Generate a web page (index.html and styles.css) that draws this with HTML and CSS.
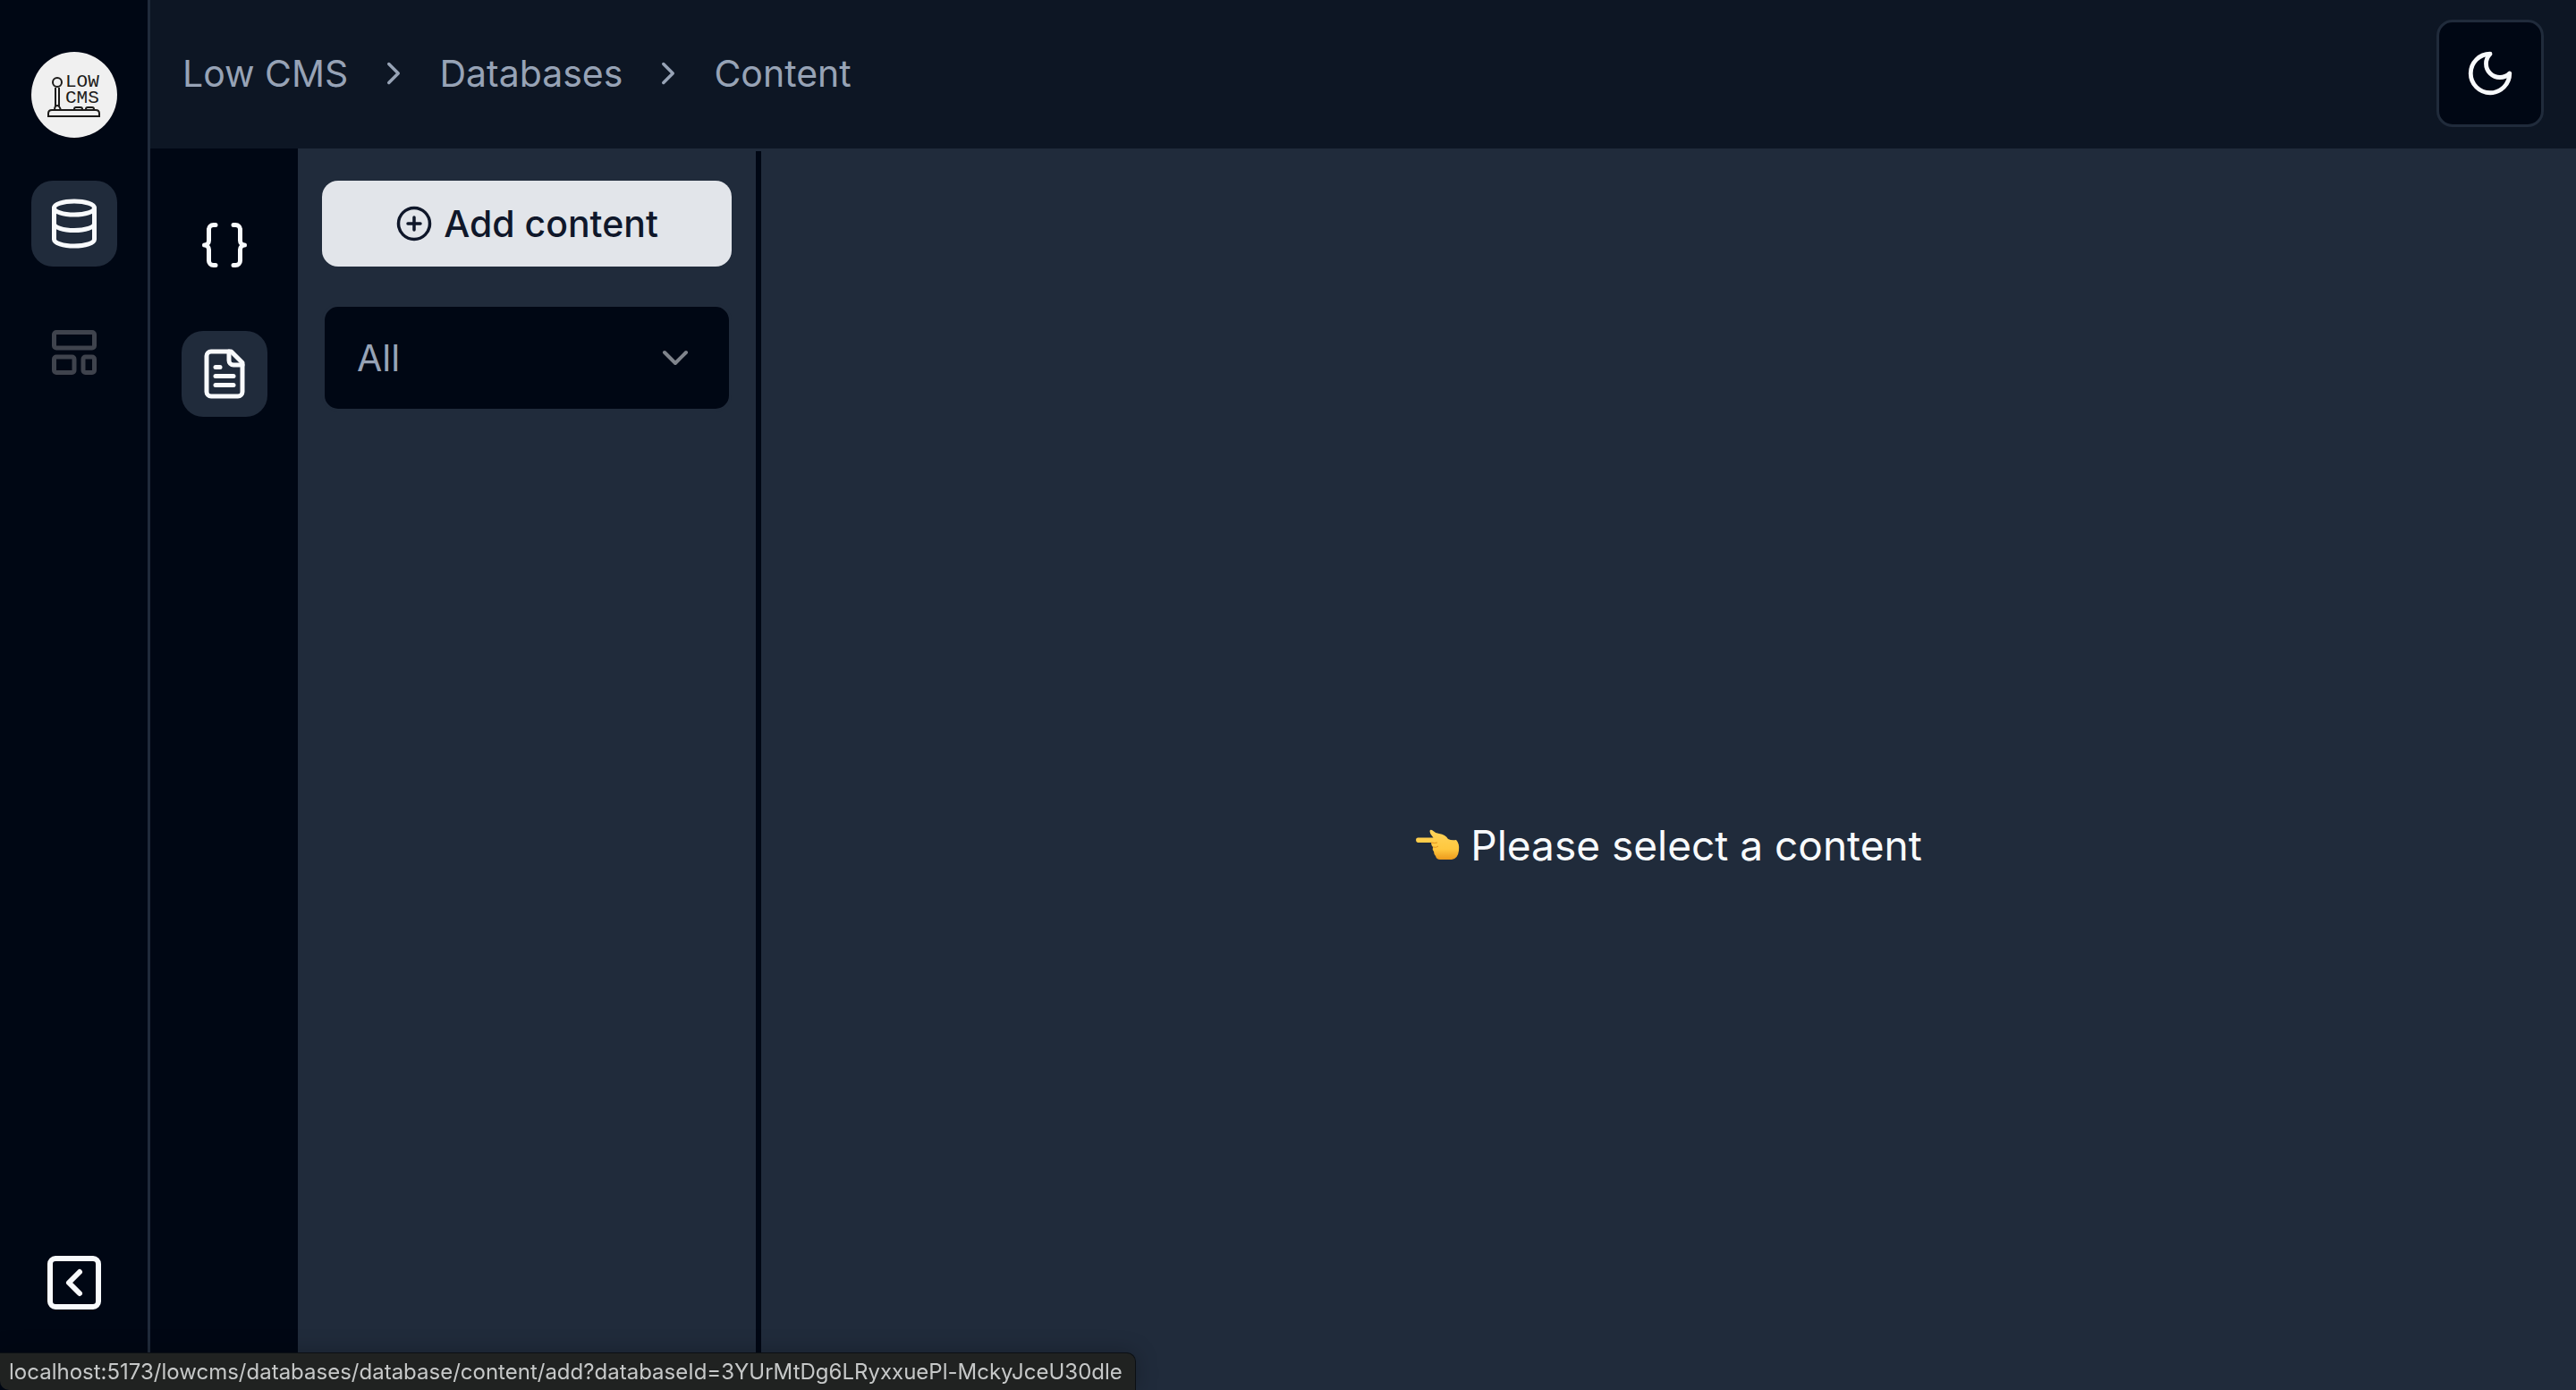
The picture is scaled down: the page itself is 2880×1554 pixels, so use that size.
FILE: index.html
```html
<!DOCTYPE html>
<html lang="en">
<head>
<meta charset="utf-8">
<title>Low CMS</title>
<link rel="stylesheet" href="styles.css">
</head>
<body>
<div class="app">
  <nav class="rail" aria-label="Main">
    <a class="logo" href="#" aria-label="Low CMS home">
      <svg viewBox="0 0 96 96" fill="none" stroke="#1c1b19" stroke-width="2">
        <circle cx="29" cy="34" r="5"/>
        <path d="M27 40v21M31 40v21M26 65c0-3 1-5 3-5s3 2 4 5"/>
        <path d="M19 72v-3q0-4 4-4h49q4 0 4 4v3z"/>
        <path d="M48 65v-1q0-2 2-2h5q2 0 2 2v1M61 65v-1q0-2 2-2h5q2 0 2 2v1"/>
        <text class="logo-text" x="38" y="39">LOW</text>
        <text class="logo-text" x="38" y="57">CMS</text>
      </svg>
    </a>
    <a class="nav-item active" href="#" aria-label="Databases">
      <svg class="icon" viewBox="0 0 24 24"><ellipse cx="12" cy="5" rx="9" ry="3"/><path d="M3 5v14a9 3 0 0 0 18 0V5"/><path d="M3 12a9 3 0 0 0 18 0"/></svg>
    </a>
    <a class="nav-item disabled" href="#" aria-label="Templates">
      <svg class="icon" viewBox="0 0 24 24"><rect width="18" height="7" x="3" y="3" rx="1"/><rect width="9" height="7" x="3" y="14" rx="1"/><rect width="5" height="7" x="16" y="14" rx="1"/></svg>
    </a>
    <button class="collapse" type="button" aria-label="Collapse">
      <svg class="icon icon-xl" viewBox="0 0 24 24"><rect width="18" height="18" x="3" y="3" rx="2"/><path d="m14 16-4-4 4-4"/></svg>
    </button>
  </nav>
  <div class="page">
    <header class="topbar">
      <nav class="crumbs" aria-label="Breadcrumb">
        <a href="#">Low CMS</a>
        <svg class="icon icon-sm" viewBox="0 0 24 24"><path d="m9 18 6-6-6-6"/></svg>
        <a href="#">Databases</a>
        <svg class="icon icon-sm" viewBox="0 0 24 24"><path d="m9 18 6-6-6-6"/></svg>
        <a href="#">Content</a>
      </nav>
      <button class="theme" type="button" aria-label="Toggle theme">
        <svg class="icon icon-moon" viewBox="0 0 24 24"><path d="M12 3a6 6 0 0 0 9 9 9 9 0 1 1-9-9Z"/></svg>
      </button>
    </header>
    <div class="workspace">
      <nav class="subnav" aria-label="Database">
        <a class="nav-item" href="#" aria-label="Schema">
          <svg class="icon" viewBox="0 0 24 24"><path d="M8 3H7a2 2 0 0 0-2 2v5a2 2 0 0 1-2 2 2 2 0 0 1 2 2v5c0 1.1.9 2 2 2h1"/><path d="M16 21h1a2 2 0 0 0 2-2v-5c0-1.1.9-2 2-2a2 2 0 0 1-2-2V5a2 2 0 0 0-2-2h-1"/></svg>
        </a>
        <a class="nav-item active" href="#" aria-label="Content">
          <svg class="icon" viewBox="0 0 24 24"><path d="M15 2H6a2 2 0 0 0-2 2v16a2 2 0 0 0 2 2h12a2 2 0 0 0 2-2V7Z"/><path d="M14 2v4a2 2 0 0 0 2 2h4"/><path d="M10 9H8"/><path d="M16 13H8"/><path d="M16 17H8"/></svg>
        </a>
      </nav>
      <aside class="list">
        <button class="add" type="button">
          <svg class="icon icon-sm" viewBox="0 0 24 24"><circle cx="12" cy="12" r="10"/><path d="M8 12h8"/><path d="M12 8v8"/></svg>
          Add content
        </button>
        <div class="filter">
          <select aria-label="Filter content"><option>All</option></select>
          <svg class="icon icon-md" viewBox="0 0 24 24"><path d="m6 9 6 6 6-6"/></svg>
        </div>
      </aside>
      <main class="detail">
        <p class="empty">
          <svg class="hand" viewBox="0 0 50 38" aria-hidden="true">
            <defs>
              <linearGradient id="skin" x1="0" y1="0" x2="0" y2="1"><stop offset="0" stop-color="#ffd35a"/><stop offset=".65" stop-color="#ffc83f"/><stop offset="1" stop-color="#ec9a1c"/></linearGradient>
            </defs>
            <path fill="url(#skin)" d="M3 10.500Q1 10.500 1 13T3 16h15q0 3 2 5-1 3 1 5 0 3 2 5 1 4 5 4h13q7-1 8-10 1-8-3-12-5 1-9-1-3-5-10-6-5-1-8-4-2-1-2.500 1 0 3 4 7.500z"/>
            <path fill="none" stroke="#e0921d" stroke-width="1" d="M18 16q4 1 7 0M20 21q4 1 6-1"/>
          </svg>
          Please select a content
        </p>
      </main>
    </div>
  </div>
</div>
<div class="status">localhost:5173/lowcms/databases/database/content/add?databaseId=3YUrMtDg6LRyxxuePl-MckyJceU30dle</div>
</body>
</html>
```
FILE: styles.css
```css
:root {
  --base: #000714;
  --bar: #0d1624;
  --panel: #202b3b;
  --muted: #97a3b6;
  --text: #f8fafc;
}
* { box-sizing: border-box; }
body {
  margin: 0;
  background: var(--panel);
  color: var(--text);
  font-family: Inter, "Liberation Sans", sans-serif;
  font-size: 41px;
  line-height: 60px;
}
a { color: inherit; text-decoration: none; }
button, select { font: inherit; color: inherit; border: 0; margin: 0; }
.icon {
  display: block;
  flex: none;
  width: 60px;
  height: 60px;
  fill: none;
  stroke: currentColor;
  stroke-width: 2;
  stroke-linecap: round;
  stroke-linejoin: round;
}
.icon-sm { width: 42px; height: 42px; }
.icon-md { width: 48px; height: 48px; }
.icon-moon { width: 58px; height: 58px; }
.icon-xl { width: 72px; height: 72px; }

.app { display: flex; height: 100vh; overflow: hidden; }
.rail {
  flex: none;
  width: 168px;
  padding: 58px 0 72px;
  display: flex;
  flex-direction: column;
  align-items: center;
  gap: 48px;
  background: var(--base);
  border-right: 3px solid var(--panel);
}
.logo {
  width: 96px;
  height: 96px;
  border-radius: 50%;
  background: #f0f0f0;
}
.logo svg { display: block; }
.logo-text {
  font-family: "Liberation Mono", monospace;
  font-size: 21px;
  fill: #1c1b19;
  stroke: none;
}
.nav-item {
  width: 96px;
  height: 96px;
  display: grid;
  place-items: center;
  border-radius: 24px;
}
.nav-item.active { background: var(--panel); }
.nav-item.disabled { color: #3f434d; }
.collapse {
  margin-top: auto;
  padding: 12px;
  background: none;
}
.page { flex: 1; min-width: 0; display: flex; flex-direction: column; }
.topbar {
  flex: none;
  display: flex;
  align-items: center;
  justify-content: space-between;
  padding: 22px 36px 24px;
  background: var(--bar);
}
.crumbs { display: flex; align-items: center; gap: 30px; color: var(--muted); }
.theme {
  width: 120px;
  height: 120px;
  padding: 0;
  display: grid;
  place-items: center;
  background: var(--base);
  border: 3px solid var(--panel);
  border-radius: 18px;
}
.workspace { flex: none; display: flex; height: 100vh; }
.subnav {
  flex: none;
  width: 165px;
  padding-top: 60px;
  display: flex;
  flex-direction: column;
  align-items: center;
  gap: 48px;
  background: var(--base);
}
.list {
  flex: none;
  width: 518px;
  margin-top: 3px;
  padding: 33px 27px;
  display: flex;
  flex-direction: column;
  gap: 42px;
  border-right: 6px solid var(--base);
}
.add {
  height: 96px;
  display: flex;
  align-items: center;
  justify-content: center;
  gap: 12px;
  border-radius: 18px;
  background: #e2e5ea;
  color: #0f172a;
  font-weight: 500;
}
.filter { display: grid; align-items: center; }
.filter > * { grid-area: 1 / 1; }
.filter select {
  appearance: none;
  width: 100%;
  height: 120px;
  padding: 0 36px;
  border: 3px solid var(--panel);
  border-radius: 18px;
  background: var(--base);
  color: var(--muted);
}
.filter .icon {
  justify-self: end;
  margin-right: 39px;
  color: #7f848c;
  pointer-events: none;
}
.detail { flex: 1; margin-top: 3px; display: grid; place-items: center; }
.empty {
  margin: 0;
  display: flex;
  align-items: center;
  gap: 12px;
  font-size: 46px;
}
.hand { width: 50px; height: 38px; }
.status {
  position: fixed;
  left: 0;
  bottom: 0;
  padding: 0 14px 0 10px;
  font-size: 24px;
  line-height: 41px;
  white-space: nowrap;
  color: #c6c8c8;
  background: #202221;
  border-top: 1px solid #0b0f14;
  border-right: 1px solid #0b0f14;
  border-radius: 0 10px 0 10px;
  box-shadow: 0 0 24px rgb(0 0 0 / 25%);
}
```
